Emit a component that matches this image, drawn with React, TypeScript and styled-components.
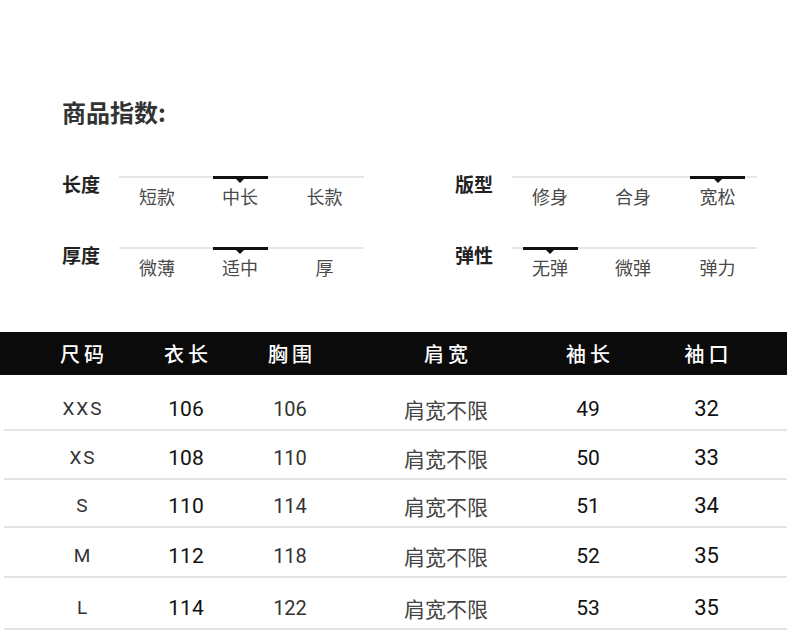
import styled, { createGlobalStyle } from 'styled-components'

const GlobalStyle = createGlobalStyle`
  body {
    margin: 0;
    background: #fff;
  }
`

const Page = styled.div`
  width: 790px;
  height: 631px;
  padding-top: 97px;
  box-sizing: border-box;
  overflow: hidden;
  font-family: "Noto Sans CJK SC", sans-serif;
`

const Title = styled.h2`
  margin: 0 0 0 62px;
  font-size: 24px;
  line-height: 30px;
  font-weight: 700;
  color: #333;
`

const Attrs = styled.div`
  display: grid;
  grid-template-columns: 393px 1fr;
  row-gap: 36px;
  padding-left: 62px;
  margin-top: 45px;
`

const Attr = styled.div`
  display: flex;
  align-items: flex-start;
`

const Label = styled.div`
  width: 57px;
  font-size: 19px;
  line-height: 24px;
  font-weight: 700;
  color: #222;
`

const Track = styled.div`
  width: 245px;
  margin-top: 4px;
  display: grid;
  grid-template-columns: 76px 90px 1fr;
`

const Option = styled.div`
  display: flex;
  flex-direction: column;
  align-items: center;
`

const Bar = styled.div`
  align-self: stretch;
  height: 2px;
  background: #e6e6e6;
  display: flex;
  justify-content: center;
  align-items: center;
`

const Marker = styled.div`
  width: 55px;
  height: 3px;
  background: #111;
  position: relative;
  flex: none;

  &::after {
    content: "";
    position: absolute;
    top: 3px;
    left: 50%;
    margin-left: -4px;
    border-left: 4px solid transparent;
    border-right: 4px solid transparent;
    border-top: 4px solid #111;
  }
`

const OptText = styled.div`
  margin-top: 7px;
  font-size: 18px;
  line-height: 22px;
  color: #4a4a4a;
`

const Table = styled.div`
  width: 787px;
  margin-top: 54px;
`

const cols = '104px 104px 104px 208px 76px 1fr'

const Head = styled.div`
  display: grid;
  grid-template-columns: ${cols};
  padding-left: 30px;
  height: 43px;
  align-items: center;
  background: #0b0b0b;
`

const HeadCell = styled.div`
  text-align: center;
  color: #fff;
  font-size: 20px;
  line-height: 24px;
  font-weight: 500;
  letter-spacing: 4px;
  text-indent: 4px;
`

const Row = styled.div<{ $h: number }>`
  display: grid;
  grid-template-columns: ${cols};
  padding-left: 26px;
  margin-left: 4px;
  height: ${p => p.$h}px;
  box-sizing: border-box;
  align-items: end;
  padding-bottom: 8px;
  border-bottom: 2px solid #e4e4e4;
`

const Cell = styled.div<{ $cjk?: boolean; $size: number; $color: string; $spacing?: number }>`
  text-align: center;
  font-family: ${p => (p.$cjk ? '"Noto Sans CJK SC", sans-serif' : 'Roboto, "Noto Sans", sans-serif')};
  font-size: ${p => p.$size}px;
  line-height: 24px;
  color: ${p => p.$color};
  letter-spacing: ${p => p.$spacing ?? 0}px;
  text-indent: ${p => p.$spacing ?? 0}px;
`

const attrs = [
  { label: '长度', options: ['短款', '中长', '长款'], active: 1 },
  { label: '版型', options: ['修身', '合身', '宽松'], active: 2 },
  { label: '厚度', options: ['微薄', '适中', '厚'], active: 1 },
  { label: '弹性', options: ['无弹', '微弹', '弹力'], active: 0 },
]

const headers = ['尺码', '衣长', '胸围', '肩宽', '袖长', '袖口']

const colStyle = [
  { size: 19, color: '#333', spacing: 2 },
  { size: 21, color: '#111' },
  { size: 20, color: '#333' },
  { size: 21, color: '#444', cjk: true },
  { size: 21, color: '#111' },
  { size: 22, color: '#111' },
]

const rows = [
  { h: 56, v: ['XXS', '106', '106', '肩宽不限', '49', '32'] },
  { h: 49, v: ['XS', '108', '110', '肩宽不限', '50', '33'] },
  { h: 48, v: ['S', '110', '114', '肩宽不限', '51', '34'] },
  { h: 50, v: ['M', '112', '118', '肩宽不限', '52', '35'] },
  { h: 52, v: ['L', '114', '122', '肩宽不限', '53', '35'] },
]

export default function App() {
  return (
    <>
      <GlobalStyle />
      <Page>
        <Title>商品指数:</Title>

        <Attrs>
          {attrs.map(a => (
            <Attr key={a.label}>
              <Label>{a.label}</Label>
              <Track>
                {a.options.map((o, i) => (
                  <Option key={o}>
                    <Bar>{i === a.active && <Marker />}</Bar>
                    <OptText>{o}</OptText>
                  </Option>
                ))}
              </Track>
            </Attr>
          ))}
        </Attrs>

        <Table>
          <Head>
            {headers.map(h => (
              <HeadCell key={h}>{h}</HeadCell>
            ))}
          </Head>
          {rows.map(r => (
            <Row key={r.v[0]} $h={r.h}>
              {r.v.map((v, i) => (
                <Cell
                  key={i}
                  $cjk={colStyle[i].cjk}
                  $size={colStyle[i].size}
                  $color={colStyle[i].color}
                  $spacing={colStyle[i].spacing}
                >
                  {v}
                </Cell>
              ))}
            </Row>
          ))}
        </Table>
      </Page>
    </>
  )
}
